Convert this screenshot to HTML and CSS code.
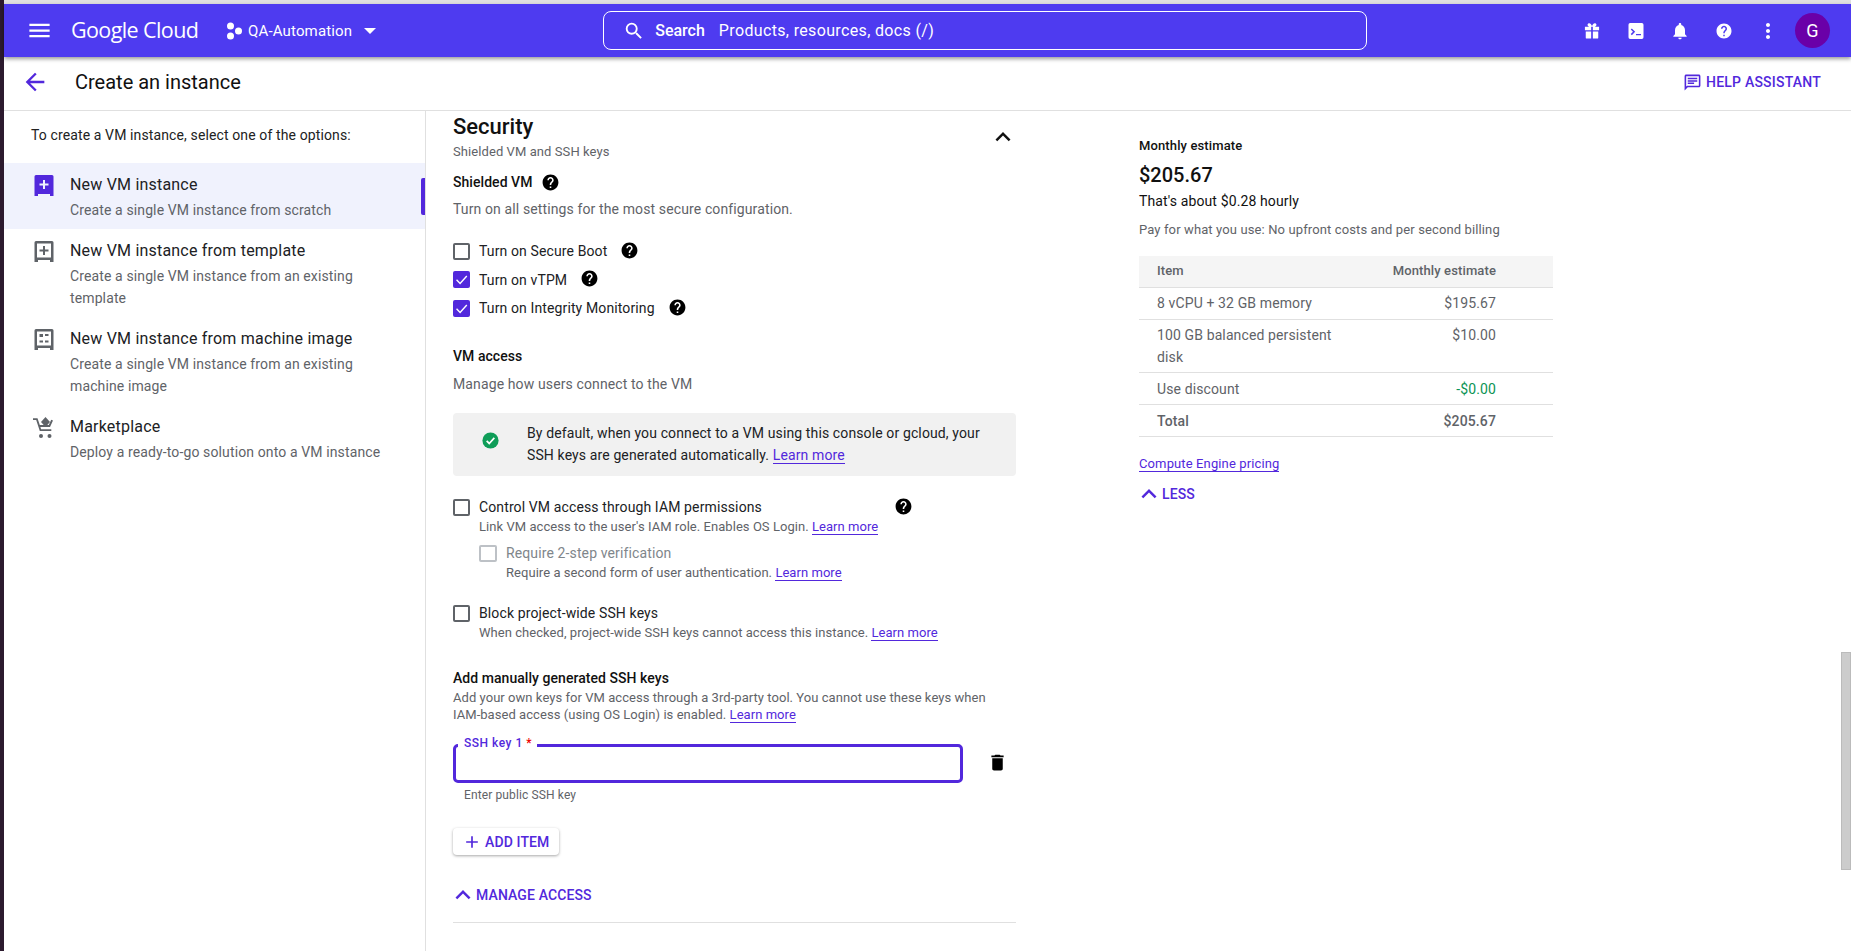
FILE: index.html
```html
<!DOCTYPE html>
<html lang="en">

<head>
    <meta charset="UTF-8">
    <title>Create an instance</title>
    <link rel="stylesheet" href="styles.css">
</head>

<body>
    <div class="edge"></div>
    <div class="shell">
        <div class="browser-line"></div>

        <header class="topbar">
            <svg class="icon menu-icon" viewBox="0 0 24 24"><path d="M3 18h18v-2H3v2zm0-5h18v-2H3v2zm0-7v2h18V6H3z"/></svg>
            <span class="logo">Google Cloud</span>
            <svg class="project-icon" viewBox="0 0 16 18"><circle cx="4.5" cy="4" r="3.5"/><circle cx="12.5" cy="9" r="3.5"/><circle cx="4.5" cy="14" r="3.5"/></svg>
            <span class="project-name">QA-Automation</span>
            <span class="caret"></span>
            <div class="search">
                <svg class="icon search-icon" viewBox="0 0 24 24"><path d="M15.5 14h-.79l-.28-.27A6.471 6.471 0 0 0 16 9.5 6.5 6.5 0 1 0 9.5 16c1.61 0 3.09-.59 4.23-1.57l.27.28v.79l5 4.99L20.49 19l-4.99-5zm-6 0C7.01 14 5 11.99 5 9.5S7.01 5 9.5 5 14 7.01 14 9.5 11.99 14 9.5 14z"/></svg>
                <span class="search-label">Search</span>
                <span class="search-hint">Products, resources, docs (/)</span>
            </div>
            <div class="top-actions">
                <span class="top-btn"><svg class="icon" viewBox="0 0 24 24"><path d="M3.500 7h7.500v4H3.500zM13 7h7.500v4H13zM4.500 12.500H11V21H5.500a1 1 0 0 1-1-1zM13 12.500h6.500V20a1 1 0 0 1-1 1H13zM7.500 3c1.800-1 3.500.5 4.500 3 1-2.500 2.700-4 4.500-3 1.500 1 1 3-1 4h-7c-2-1-2.500-3-1-4z"/></svg></span>
                <span class="top-btn"><svg class="icon" viewBox="0 0 24 24"><path fill-rule="evenodd" d="M5 2.500h14a2 2 0 0 1 2 2v15a2 2 0 0 1-2 2H5a2 2 0 0 1-2-2v-15a2 2 0 0 1 2-2zm2 6.500-1.300 1.300 2.700 2.700-2.700 2.700L7 17l4-4zM12 15.500V17h6v-1.500z"/></svg></span>
                <span class="top-btn"><svg class="icon" viewBox="0 0 24 24"><path d="M12 22c1.100 0 2-.9 2-2h-4c0 1.100.9 2 2 2zm6-6v-5c0-3.070-1.630-5.640-4.500-6.320V4c0-.83-.67-1.500-1.500-1.500s-1.500.67-1.500 1.500v.68C7.640 5.360 6 7.920 6 11v5l-2 2v1h16v-1l-2-2z"/></svg></span>
                <span class="top-btn"><svg class="icon top-help" viewBox="0 0 24 24"><use href="#help-path"/></svg></span>
                <span class="top-btn"><svg class="icon top-more" viewBox="0 0 24 24"><path d="M12 8c1.100 0 2-.9 2-2s-.9-2-2-2-2 .9-2 2 .9 2 2 2zm0 2c-1.100 0-2 .9-2 2s.9 2 2 2 2-.9 2-2-.9-2-2-2zm0 6c-1.100 0-2 .9-2 2s.9 2 2 2 2-.9 2-2-.9-2-2-2z"/></svg></span>
                <span class="avatar">G</span>
            </div>
        </header>

        <div class="subbar">
            <svg class="icon back-icon" viewBox="0 0 24 24"><path d="M20 11H7.830l5.590-5.590L12 4l-8 8 8 8 1.410-1.410L7.830 13H20v-2z"/></svg>
            <h1 class="page-title">Create an instance</h1>
            <a class="help-assistant" href="#">
                <svg class="icon" viewBox="0 0 24 24"><path d="M20 2H4c-1.100 0-2 .9-2 2v18l4-4h14c1.100 0 2-.9 2-2V4c0-1.100-.9-2-2-2zm0 14H5.170L4 17.170V4h16v12z"/><path d="M6 12h8v2H6zm0-3h12v2H6zm0-3h12v2H6z"/></svg>
                HELP ASSISTANT
            </a>
        </div>

        <div class="columns">
            <aside class="side">
                <p class="side-intro">To create a VM instance, select one of the options:</p>
                <div class="option selected">
                    <svg class="option-icon" viewBox="0 0 20 24"><path fill-rule="evenodd" d="M2 1h16a1.500 1.500 0 0 1 1.500 1.500V22h-3.500v-2H4v2H.5V2.500A1.500 1.500 0 0 1 2 1zm7 5v3.500H5.500v2H9V15h2v-3.500h3.500v-2H11V6z"/></svg>
                    <div>
                        <div class="option-title">New VM instance</div>
                        <div class="option-text">Create a single VM instance from scratch</div>
                    </div>
                </div>
                <div class="option">
                    <svg class="option-icon" viewBox="0 0 20 24"><path fill-rule="evenodd" d="M2 1h16a1.500 1.500 0 0 1 1.500 1.500V22H16v-2H4v2H.5V2.500A1.500 1.500 0 0 1 2 1zm1 2.500v14h14v-14zM9 6h2v3.500h3.500v2H11V15H9v-3.500H5.500v-2H9z"/></svg>
                    <div>
                        <div class="option-title">New VM instance from template</div>
                        <div class="option-text">Create a single VM instance from an existing template</div>
                    </div>
                </div>
                <div class="option">
                    <svg class="option-icon" viewBox="0 0 20 24"><path fill-rule="evenodd" d="M2 1h16a1.500 1.500 0 0 1 1.500 1.500V22H16v-2H4v2H.5V2.500A1.500 1.500 0 0 1 2 1zm1 2.500v14h14v-14zM5.500 6H9v3H5.500zM11 6h3.500v2H11zM5.500 12.500h3.500v2H5.500zM11 12.500h3.500v2H11z"/></svg>
                    <div>
                        <div class="option-title">New VM instance from machine image</div>
                        <div class="option-text">Create a single VM instance from an existing machine image</div>
                    </div>
                </div>
                <div class="option">
                    <svg class="cart-icon" viewBox="0 0 24 24"><path d="M13.500 1 18 6l-4.500 5L9 6z"/><path d="M1 4h3.200l3.600 11h11.500v-1.800H9.100L8.400 11H18l3-6.500-1.800-.8L16.800 9H7.800L5.500 2.200H1z"/><circle cx="9" cy="20" r="2"/><circle cx="17.500" cy="20" r="2"/></svg>
                    <div>
                        <div class="option-title">Marketplace</div>
                        <div class="option-text">Deploy a ready-to-go solution onto a VM instance</div>
                    </div>
                </div>
            </aside>

            <main class="form">
                <div class="section-head">
                    <div>
                        <h2 class="section-title">Security</h2>
                        <div class="section-sub">Shielded VM and SSH keys</div>
                    </div>
                    <svg class="icon collapse-icon" viewBox="0 0 24 24"><path d="M12 8l-6 6 1.410 1.410L12 10.830l4.590 4.580L18 14z"/></svg>
                </div>

                <div class="label shielded-label">Shielded VM <svg class="help-icon" viewBox="0 0 24 24"><use href="#help-path"/></svg></div>
                <p class="desc shielded-desc">Turn on all settings for the most secure configuration.</p>

                <div class="check-row first-check"><span class="box"></span>Turn on Secure Boot <svg class="help-icon" viewBox="0 0 24 24"><use href="#help-path"/></svg></div>
                <div class="check-row"><span class="box checked"><svg viewBox="0 0 24 24"><path d="M5 12.500l5 5L19.500 7"/></svg></span>Turn on vTPM <svg class="help-icon" viewBox="0 0 24 24"><use href="#help-path"/></svg></div>
                <div class="check-row"><span class="box checked"><svg viewBox="0 0 24 24"><path d="M5 12.500l5 5L19.500 7"/></svg></span>Turn on Integrity Monitoring <svg class="help-icon" viewBox="0 0 24 24"><use href="#help-path"/></svg></div>

                <div class="label access-label">VM access</div>
                <p class="desc access-desc">Manage how users connect to the VM</p>

                <div class="info-box">
                    <svg class="ok-icon" viewBox="0 0 20 20"><circle cx="10" cy="10" r="9.500"/><path d="M5.500 10.500l3 3 6-6.500"/></svg>
                    <p>By default, when you connect to a VM using this console or gcloud, your SSH keys are generated automatically. <a class="learn" href="#">Learn more</a></p>
                </div>

                <div class="check-row control-row"><span class="box"></span>Control VM access through IAM permissions <svg class="help-icon far-help" viewBox="0 0 24 24"><use href="#help-path"/></svg></div>
                <p class="small indented">Link VM access to the user's IAM role. Enables OS Login. <a class="learn" href="#">Learn more</a></p>
                <div class="check-row nested disabled"><span class="box"></span>Require 2-step verification</div>
                <p class="small nested-text">Require a second form of user authentication. <a class="learn" href="#">Learn more</a></p>
                <div class="check-row block-row"><span class="box"></span>Block project-wide SSH keys</div>
                <p class="small indented block-text">When checked, project-wide SSH keys cannot access this instance. <a class="learn" href="#">Learn more</a></p>

                <div class="label keys-label">Add manually generated SSH keys</div>
                <p class="small keys-desc">Add your own keys for VM access through a 3rd-party tool. You cannot use these keys when<br>IAM-based access (using OS Login) is enabled. <a class="learn" href="#">Learn more</a></p>

                <div class="key-row">
                    <div class="key-field"><span class="key-label">SSH key 1 <em>*</em></span></div>
                    <svg class="icon trash-icon" viewBox="0 0 24 24"><path d="M6 19c0 1.100.9 2 2 2h8c1.100 0 2-.9 2-2V7H6v12zM19 4h-3.500l-1-1h-5l-1 1H5v2h14V4z"/></svg>
                </div>
                <div class="key-hint">Enter public SSH key</div>

                <button class="add-item"><svg class="icon" viewBox="0 0 24 24"><path d="M19 13h-6v6h-2v-6H5v-2h6V5h2v6h6v2z"/></svg>ADD ITEM</button>

                <div class="toggle manage"><svg class="icon" viewBox="0 0 24 24"><path d="M12 8l-6 6 1.410 1.410L12 10.830l4.590 4.580L18 14z"/></svg>MANAGE ACCESS</div>
                <div class="form-rule"></div>
            </main>

            <section class="estimate">
                <div class="est-title">Monthly estimate</div>
                <div class="est-price">$205.67</div>
                <div class="est-hourly">That's about $0.28 hourly</div>
                <div class="est-note">Pay for what you use: No upfront costs and per second billing</div>
                <table class="est-table">
                    <tr><th>Item</th><th>Monthly estimate</th></tr>
                    <tr><td>8 vCPU + 32 GB memory</td><td>$195.67</td></tr>
                    <tr class="two-line"><td>100 GB balanced persistent disk</td><td>$10.00</td></tr>
                    <tr class="low"><td>Use discount</td><td class="discount">-$0.00</td></tr>
                    <tr class="low total"><td>Total</td><td>$205.67</td></tr>
                </table>
                <a class="pricing" href="#">Compute Engine pricing</a>
                <div class="toggle less"><svg class="icon" viewBox="0 0 24 24"><path d="M12 8l-6 6 1.410 1.410L12 10.830l4.590 4.580L18 14z"/></svg>LESS</div>
            </section>
        </div>
    </div>
    <div class="scroll-thumb"></div>

    <svg class="defs" width="0" height="0">
        <defs>
            <path id="help-path" d="M12 2C6.480 2 2 6.480 2 12s4.480 10 10 10 10-4.480 10-10S17.520 2 12 2zm1 17h-2v-2h2v2zm2.070-7.750l-.9.920C13.450 12.900 13 13.500 13 15h-2v-.5c0-1.100.45-2.100 1.170-2.830l1.240-1.260c.37-.36.59-.86.59-1.410 0-1.100-.9-2-2-2s-2 .9-2 2H8c0-2.210 1.790-4 4-4s4 1.790 4 4c0 .88-.36 1.680-.93 2.250z"/>
        </defs>
    </svg>
</body>

</html>
```

FILE: styles.css
```css
* {
    box-sizing: border-box;
}

html,
body {
    height: 100%;
}

body {
    margin: 0;
    display: flex;
    overflow: hidden;
    background-color: #fff;
    color: #202124;
    font-family: Roboto, "Liberation Sans", sans-serif;
    font-size: 14px;
    letter-spacing: 0.12px;
}

p,
h1,
h2 {
    margin: 0;
    font-weight: normal;
}

a {
    text-decoration: none;
}

.defs {
    position: absolute;
}

.icon {
    width: 24px;
    height: 24px;
    fill: currentColor;
    flex: none;
}

.edge {
    width: 4px;
    flex: none;
    background-color: #2c1a2e;
}

.shell {
    flex: 1;
    min-width: 0;
}

.browser-line {
    height: 4px;
    background-color: #e0e0e0;
}

/* barra superior */
.topbar {
    height: 53px;
    display: flex;
    align-items: center;
    padding-left: 22px;
    background-color: #4e3bf0;
    color: #fff;
    box-shadow: 0 2px 4px rgba(0, 0, 0, 0.4);
    position: relative;
}

.menu-icon {
    width: 27px;
    height: 27px;
}

.logo {
    margin-left: 18px;
    margin-top: -3px;
    width: 127px;
    font-family: "Open Sans", sans-serif;
    font-size: 21.5px;
    letter-spacing: -0.6px;
    white-space: nowrap;
}

.project-icon {
    width: 16px;
    height: 18px;
    margin-left: 28px;
    fill: #fff;
}

.project-name {
    margin-left: 6px;
    font-size: 15px;
    letter-spacing: 0.15px;
}

.caret {
    margin-left: 12px;
    border-left: 6px solid transparent;
    border-right: 6px solid transparent;
    border-top: 6px solid #fff;
}

.search {
    margin-left: 227px;
    width: 764px;
    height: 39px;
    display: flex;
    align-items: center;
    padding-left: 19px;
    border: 1px solid #fff;
    border-radius: 8px;
    font-size: 16px;
}

.search-icon {
    width: 22px;
    height: 22px;
}

.search-label {
    margin-left: 10px;
    font-weight: 500;
    letter-spacing: 0;
}

.search-hint {
    margin-left: 14px;
    letter-spacing: 0.35px;
}

.top-actions {
    margin-left: auto;
    padding-right: 21px;
    display: flex;
    align-items: center;
}

.top-btn {
    width: 44px;
    display: flex;
    justify-content: center;
}

.top-btn .icon {
    width: 20px;
    height: 20px;
}

.top-btn .top-help {
    width: 18px;
    height: 18px;
}

.top-btn .top-more {
    width: 24px;
    height: 24px;
}

.avatar {
    width: 35px;
    height: 35px;
    margin-left: 5px;
    border-radius: 50%;
    background-color: #6a00a8;
    display: flex;
    align-items: center;
    justify-content: center;
    font-size: 18px;
}

/* barra del titulo */
.subbar {
    height: 54px;
    display: flex;
    align-items: center;
    padding-left: 17px;
    padding-right: 30px;
    padding-bottom: 3px;
    border-bottom: 1px solid #e0e0e0;
}

.back-icon {
    width: 28px;
    height: 28px;
    color: #5228dc;
}

.page-title {
    margin-left: 26px;
    font-size: 20px;
    letter-spacing: 0;
    color: #111;
}

.help-assistant {
    margin-left: auto;
    display: flex;
    align-items: center;
    gap: 4px;
    color: #5228dc;
    font-weight: 500;
    letter-spacing: 0.22px;
}

.help-assistant .icon {
    width: 19px;
    height: 19px;
}

.columns {
    display: flex;
    height: 840px;
}

/* panel izquierdo */
.side {
    width: 422px;
    flex: none;
    border-right: 1px solid #e0e0e0;
}

.side-intro {
    padding: 14px 0 0 27px;
    height: 52px;
    line-height: 20px;
    color: #222;
}

.option {
    display: flex;
    padding: 10px 35px 8px 30px;
    position: relative;
}

.option.selected {
    background-color: #f0f2fd;
}

.option.selected::after {
    content: '';
    position: absolute;
    right: 0;
    top: 15px;
    width: 4px;
    height: 37px;
    border-radius: 2px 0 0 2px;
    background-color: #5228dc;
}

.option-icon {
    width: 20px;
    height: 24px;
    margin-top: 1px;
    margin-right: 16px;
    flex: none;
    fill: #5f6368;
}

.selected .option-icon {
    fill: #5228dc;
}

.cart-icon {
    width: 24px;
    height: 24px;
    margin: 1px 14px 0 -2px;
    flex: none;
    fill: #5f6368;
}

.option-title {
    font-size: 16px;
    line-height: 24px;
    letter-spacing: 0.2px;
    color: #202124;
}

.option-text {
    margin-top: 2px;
    line-height: 22px;
    color: #5f6368;
}

/* formulario */
.form {
    width: 563px;
    margin-left: 27px;
    flex: none;
}

.section-head {
    display: flex;
    justify-content: space-between;
    align-items: flex-end;
    padding-top: 2px;
}

.section-title {
    font-size: 22px;
    font-weight: 500;
    line-height: 28px;
    letter-spacing: 0;
    color: #111;
}

.section-sub {
    margin-top: 3px;
    font-size: 13px;
    line-height: 16px;
    letter-spacing: 0.08px;
    color: #5f6368;
}

.collapse-icon {
    width: 30px;
    height: 30px;
    margin-right: -1.5px;
    margin-bottom: 8px;
    color: #111;
}

.label {
    font-weight: 500;
    line-height: 20px;
    letter-spacing: 0.05px;
    color: #111;
    display: flex;
    align-items: center;
}

.desc {
    line-height: 20px;
    color: #5f6368;
}

.help-icon {
    width: 19px;
    height: 19px;
    margin-left: 13px;
    margin-top: -2px;
    flex: none;
    fill: #000;
}

.label .help-icon {
    margin-left: 9px;
    margin-top: 0;
}

.shielded-label {
    margin-top: 12px;
}

.shielded-desc {
    margin-top: 7px;
}

.check-row {
    height: 24px;
    margin-top: 4.5px;
    display: flex;
    align-items: center;
    color: #202124;
}

.first-check {
    margin-top: 20px;
}

.box {
    width: 17px;
    height: 17px;
    margin-right: 9px;
    flex: none;
    border: 2px solid #5f6368;
    border-radius: 2px;
}

.box.checked {
    border: 0;
    background-color: #5228dc;
}

.box svg {
    display: block;
    fill: none;
    stroke: #fff;
    stroke-width: 2;
}

.access-label {
    margin-top: 26px;
}

.access-desc {
    margin-top: 8px;
}

.info-box {
    height: 63px;
    margin-top: 19px;
    display: flex;
    align-items: center;
    padding: 0 24px 0 29px;
    padding-bottom: 2px;
    border-radius: 4px;
    background-color: #f1f1f1;
    color: #202124;
    line-height: 22px;
}

.ok-icon {
    width: 17px;
    height: 17px;
    margin-top: -6px;
    margin-right: 28px;
    flex: none;
}

.ok-icon circle {
    fill: #0f9d58;
}

.ok-icon path {
    fill: none;
    stroke: #fff;
    stroke-width: 2;
}

.learn {
    color: #5228dc;
    border-bottom: 1px solid #5228dc;
}

.small {
    font-size: 13px;
    line-height: 16px;
    letter-spacing: 0.05px;
    color: #5f6368;
}

.indented {
    margin-left: 26px;
}

.control-row {
    margin-top: 19px;
}

.far-help {
    margin-left: 132px;
}

.nested {
    height: 22px;
    margin-top: 7px;
    margin-left: 26px;
}

.disabled {
    color: #80868b;
}

.disabled .box {
    border-color: #bdc1c6;
    width: 18px;
}

.nested-text {
    margin-top: 1px;
    margin-left: 53px;
}

.block-row {
    height: 22px;
    margin-top: 21px;
}

.block-text {
    margin-top: 1px;
}

.keys-label {
    margin-top: 27px;
}

.keys-desc {
    margin-top: 1px;
    line-height: 17px;
}

.key-row {
    margin-top: 21px;
    display: flex;
    align-items: center;
}

.key-field {
    width: 510px;
    height: 39px;
    border: 3px solid #5228dc;
    border-radius: 5px;
    position: relative;
}

.key-label {
    position: absolute;
    left: 2px;
    top: -12px;
    padding: 0 5px 0 6px;
    background-color: #fff;
    font-size: 12px;
    line-height: 16px;
    font-weight: 500;
    letter-spacing: 0.5px;
    color: #5228dc;
}

.key-label em {
    font-style: normal;
    color: #e00;
}

.trash-icon {
    width: 21px;
    height: 21px;
    margin-left: 24px;
    margin-top: -2px;
    color: #000;
}

.key-hint {
    margin-top: 4px;
    padding-left: 11px;
    font-size: 12px;
    line-height: 16px;
    color: #5f6368;
}

.add-item {
    width: 106px;
    height: 27px;
    margin-top: 25px;
    padding: 0 0 0 9px;
    display: flex;
    align-items: center;
    gap: 3px;
    border: 0;
    border-radius: 4px;
    background-color: #fff;
    box-shadow: 0 1px 3px rgba(0, 0, 0, 0.35);
    color: #5228dc;
    font-family: inherit;
    font-size: 14px;
    font-weight: 500;
    letter-spacing: inherit;
}

.add-item .icon {
    width: 20px;
    height: 20px;
}

.toggle {
    display: flex;
    align-items: center;
    height: 20px;
    color: #5228dc;
    font-weight: 500;
}

.manage {
    margin-top: 30px;
}

.toggle .icon {
    width: 30px;
    height: 30px;
    margin-left: -5px;
    margin-right: -2px;
}

.form-rule {
    margin-top: 17px;
    border-top: 1px solid #e0e0e0;
}

/* estimacion */
.estimate {
    width: 414px;
    margin-left: 123px;
    flex: none;
    padding-top: 27px;
}

.est-title {
    font-size: 13px;
    font-weight: 500;
    line-height: 16px;
    color: #111;
}

.est-price {
    margin-top: 8px;
    font-size: 20px;
    font-weight: 500;
    line-height: 26px;
    letter-spacing: 0;
    color: #111;
}

.est-hourly {
    margin-top: 3px;
    line-height: 20px;
    color: #111;
}

.est-note {
    margin-top: 11px;
    font-size: 13px;
    line-height: 16px;
    color: #5f6368;
}

.est-table {
    width: 414px;
    margin-top: 18px;
    border-collapse: collapse;
    table-layout: fixed;
    color: #5f6368;
}

.est-table th {
    height: 31px;
    padding: 0 18px 2px;
    background-color: #f5f5f5;
    border-bottom: 1px solid #e0e0e0;
    font-size: 13px;
    font-weight: 500;
    text-align: left;
}

.est-table td {
    padding: 4px 18px 5px;
    line-height: 22px;
    border-bottom: 1px solid #e0e0e0;
    vertical-align: top;
}

.est-table .two-line td {
    padding-bottom: 4px;
}

.est-table .low td {
    padding-top: 5px;
    padding-bottom: 4px;
}

.est-table th:first-child,
.est-table td:first-child {
    width: 213px;
}

.est-table th:last-child,
.est-table td:last-child {
    padding-right: 57px;
    padding-left: 0;
    text-align: right;
}

.est-table .discount {
    color: #0c9455;
}

.total td {
    font-weight: 500;
}

.pricing {
    display: inline-block;
    margin-top: 19px;
    font-size: 13px;
    line-height: 15px;
    color: #5228dc;
    border-bottom: 1px solid #5228dc;
}

.less {
    margin-top: 12px;
}

.scroll-thumb {
    position: absolute;
    right: 0;
    top: 652px;
    width: 10px;
    height: 218px;
    border: 1px solid #bbb;
    background-color: #ccc;
}
```
